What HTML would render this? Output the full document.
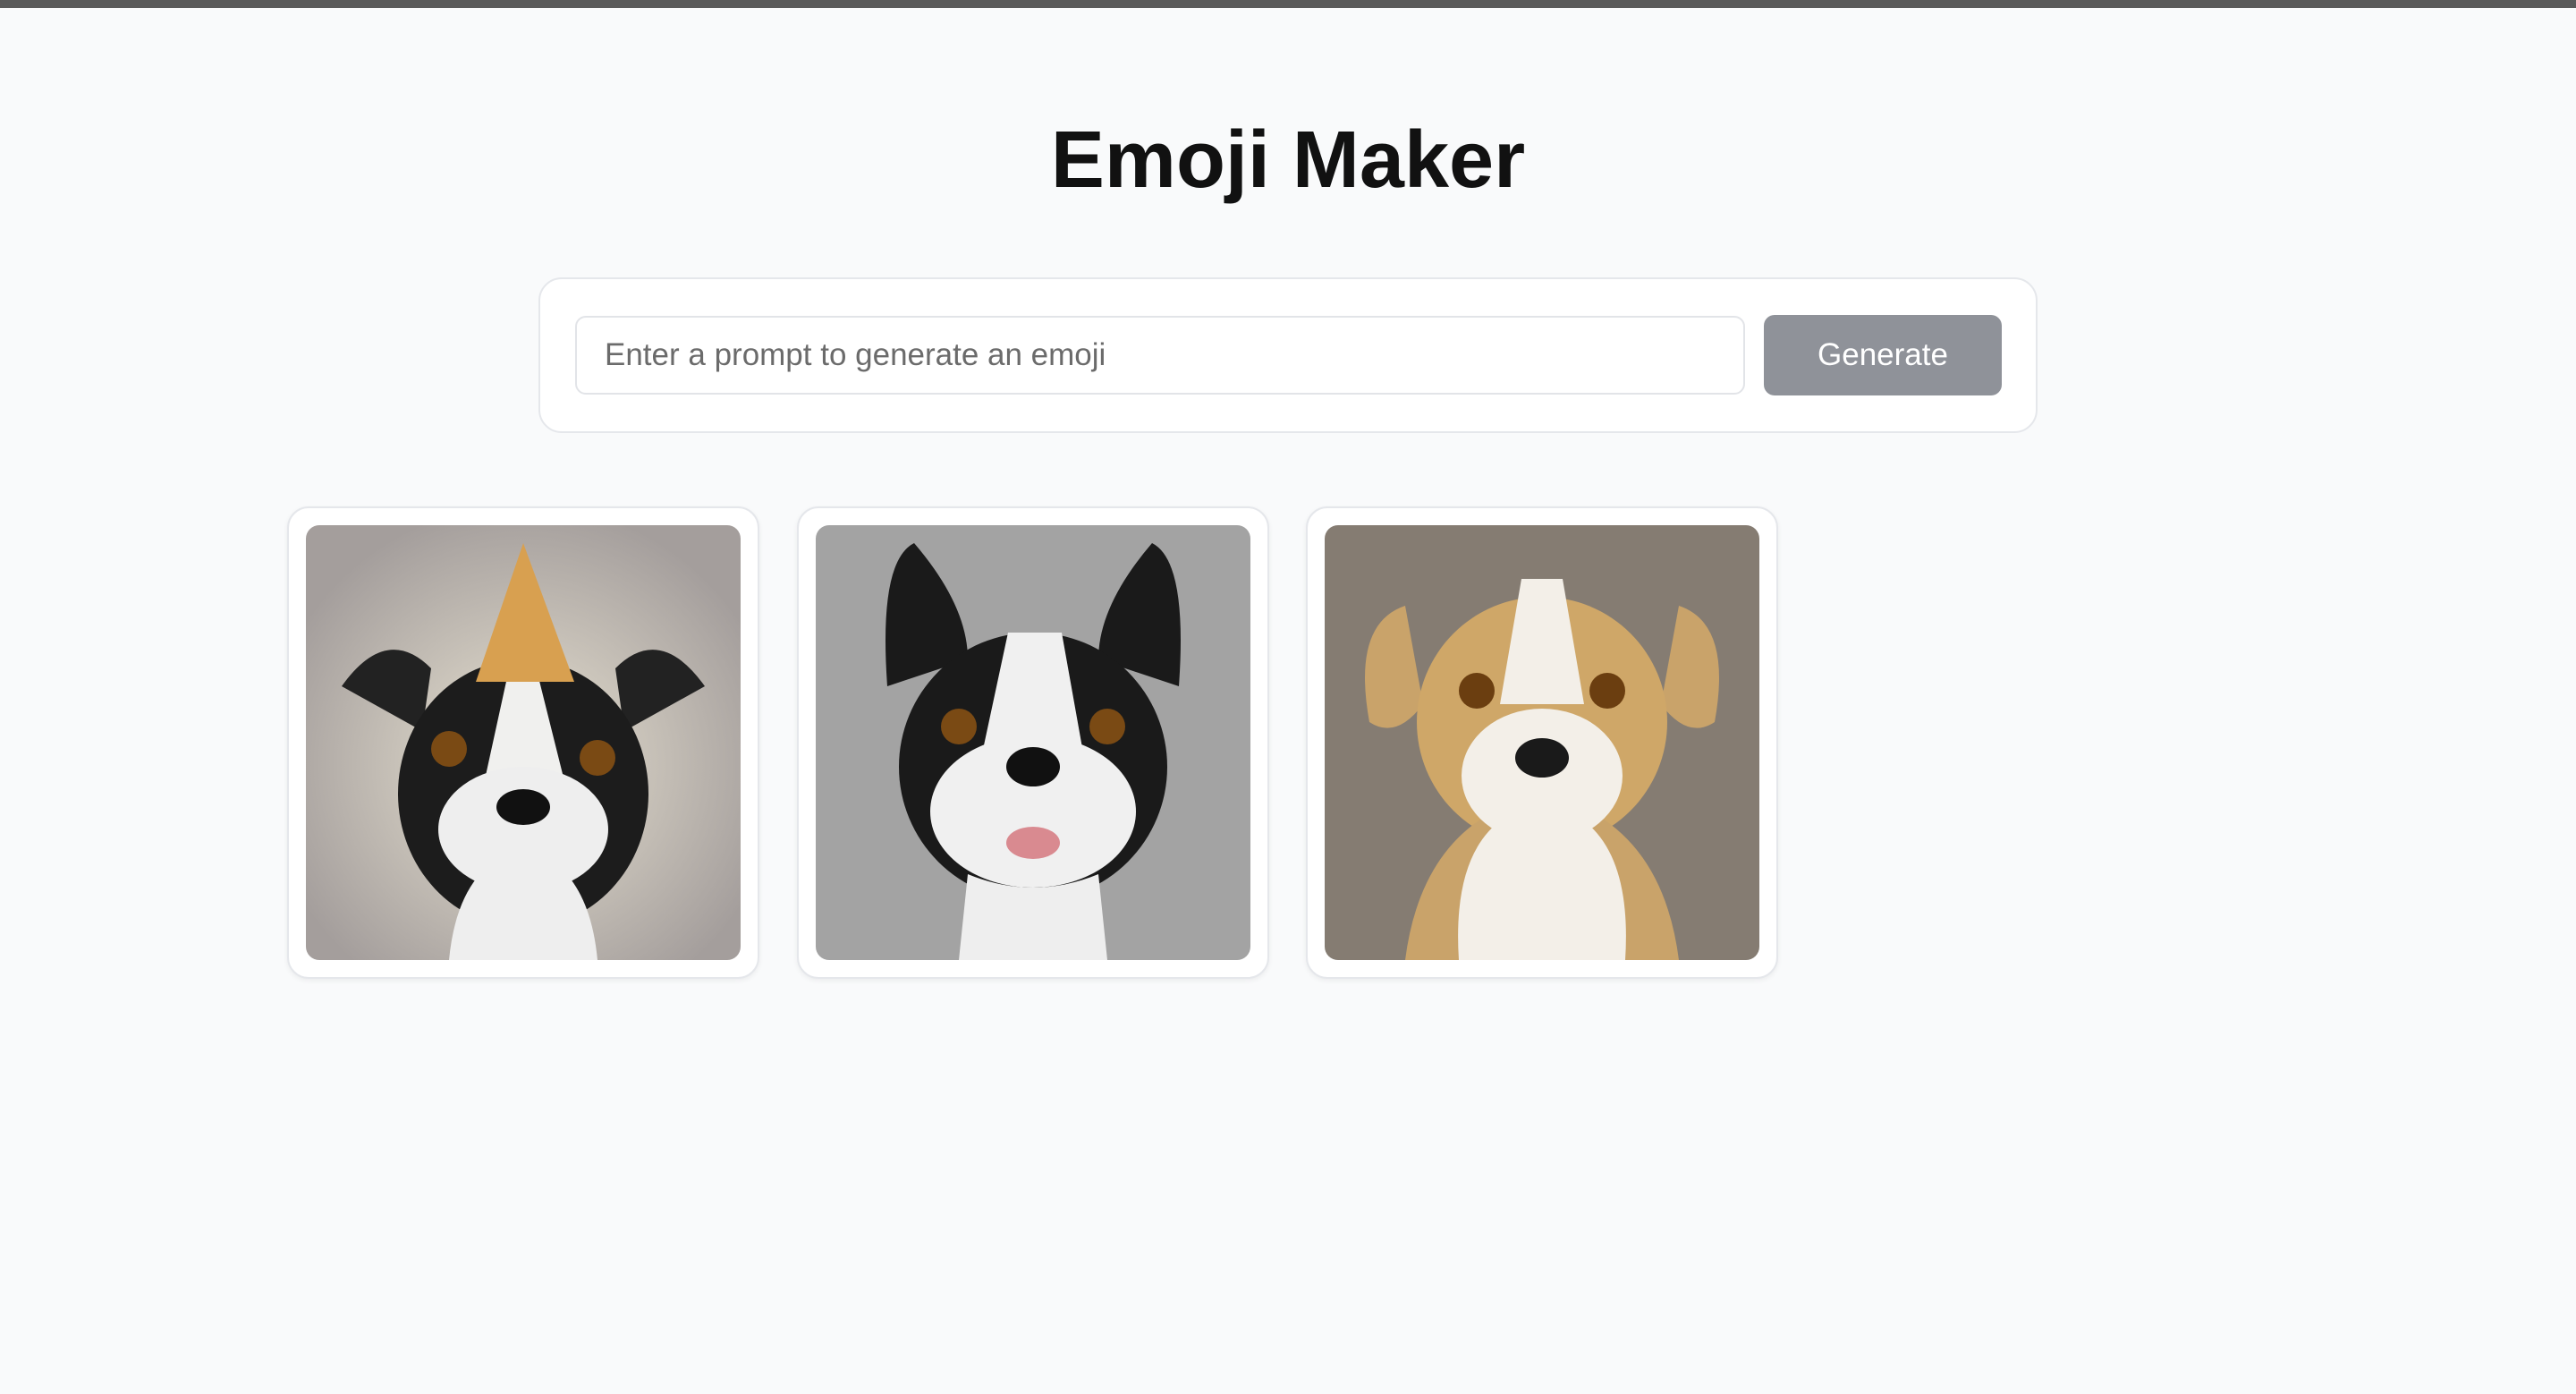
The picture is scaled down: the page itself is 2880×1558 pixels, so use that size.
<!DOCTYPE html>
<html><head><meta charset="utf-8"><style>
html,body{margin:0;padding:0}
body{width:2880px;height:1558px;background:#f9fafb;font-family:"Liberation Sans",Arial,sans-serif;position:relative;overflow:hidden}
.top{position:absolute;left:0;top:0;width:2880px;height:9px;background:#5a5a5a}
h1{position:absolute;left:0;width:2880px;top:122px;margin:0;text-align:center;font-size:90px;font-weight:bold;color:#111;line-height:115px}
.form{position:absolute;left:602px;top:310px;width:1676px;height:174px;background:#fff;border:2px solid #e5e7eb;border-radius:26px;box-sizing:border-box}
.input{position:absolute;left:643px;top:353px;width:1308px;height:88px;border:2px solid #e2e4e8;border-radius:12px;box-sizing:border-box;background:#fff;color:#6b6b6b;font-size:35px;line-height:84px;padding-left:31px}
.btn{position:absolute;left:1972px;top:352px;width:266px;height:90px;background:#8f9299;border-radius:12px;color:#fff;font-size:35px;line-height:90px;text-align:center}
.card{position:absolute;top:566px;width:528px;height:528px;background:#fff;border:2px solid #e5e7eb;border-radius:24px;box-sizing:border-box;box-shadow:0 2px 6px rgba(0,0,0,.06)}
.card svg{position:absolute;left:19px;top:19px;width:486px;height:486px;border-radius:15px}
</style></head><body>
<div class="top"></div>
<h1>Emoji Maker</h1>
<div class="form"></div>
<div class="input">Enter a prompt to generate an emoji</div>
<div class="btn">Generate</div>

<div class="card" style="left:321px"><svg viewBox="0 0 486 486"><defs><radialGradient id="g1" cx="50%" cy="55%" r="60%"><stop offset="0" stop-color="#e8e2d2"/><stop offset="1" stop-color="#a49e9c"/></radialGradient></defs><rect width="486" height="486" fill="url(#g1)"/>
<path d="M40 180 Q90 110 140 160 L130 230Z M446 180 Q396 110 346 160 L356 230Z" fill="#222"/>
<ellipse cx="243" cy="300" rx="140" ry="150" fill="#1c1c1c"/>
<path d="M160 486 Q170 380 243 360 Q316 380 326 486Z" fill="#eee"/>
<path d="M225 170 L260 170 L300 330 L190 330Z" fill="#f0f0ee"/>
<ellipse cx="243" cy="340" rx="95" ry="70" fill="#eee"/>
<ellipse cx="243" cy="315" rx="30" ry="20" fill="#111"/>
<circle cx="160" cy="250" r="20" fill="#7a4a14"/><circle cx="326" cy="260" r="20" fill="#7a4a14"/>
<path d="M243 20 L190 175 L300 175Z" fill="#d8a050"/>
</svg></div>

<div class="card" style="left:891px"><svg viewBox="0 0 486 486"><rect width="486" height="486" fill="#a3a3a3"/>
<path d="M80 180 Q70 40 110 20 Q170 90 170 150Z M406 180 Q416 40 376 20 Q316 90 316 150Z" fill="#1a1a1a"/>
<ellipse cx="243" cy="270" rx="150" ry="150" fill="#1a1a1a"/>
<path d="M215 120 L275 120 L300 260 L185 260Z" fill="#f0f0f0"/>
<ellipse cx="243" cy="320" rx="115" ry="85" fill="#f0f0f0"/>
<path d="M160 486 L170 390 Q243 420 316 390 L326 486Z" fill="#eee"/>
<ellipse cx="243" cy="270" rx="30" ry="22" fill="#111"/>
<circle cx="160" cy="225" r="20" fill="#7a4a14"/><circle cx="326" cy="225" r="20" fill="#7a4a14"/>
<ellipse cx="243" cy="355" rx="30" ry="18" fill="#d98a90"/>
</svg></div>

<div class="card" style="left:1460px"><svg viewBox="0 0 486 486"><rect width="486" height="486" fill="#857c72"/>
<path d="M90 90 Q30 110 50 220 Q80 240 110 200Z M396 90 Q456 110 436 220 Q406 240 376 200Z" fill="#c9a36a"/>
<ellipse cx="243" cy="220" rx="140" ry="140" fill="#cfa768"/>
<path d="M90 486 Q110 330 243 300 Q376 330 396 486Z" fill="#c9a36a"/>
<path d="M150 486 Q140 330 243 310 Q346 330 336 486Z" fill="#f3efe8"/>
<path d="M220 60 L266 60 L290 200 L196 200Z" fill="#f3efe8"/>
<ellipse cx="243" cy="280" rx="90" ry="75" fill="#f3efe8"/>
<ellipse cx="243" cy="260" rx="30" ry="22" fill="#1a1a1a"/>
<circle cx="170" cy="185" r="20" fill="#6b3e10"/><circle cx="316" cy="185" r="20" fill="#6b3e10"/>
</svg></div>
</body></html>
